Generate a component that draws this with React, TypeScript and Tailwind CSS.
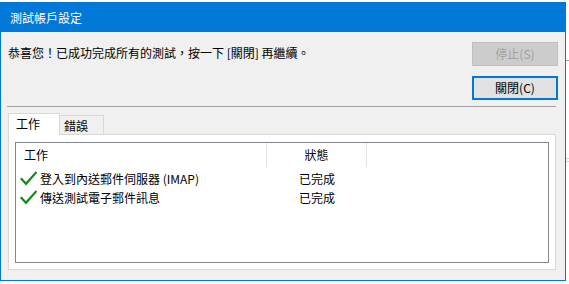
import React from 'react';

function Check() {
  return (
    <svg width="17" height="15" viewBox="0 0 17 15" className="shrink-0">
      <path d="M1.5 8 L6 12.8 L15.8 1.8" fill="none" stroke="#138a13" strokeWidth="2.2" strokeLinecap="square" />
    </svg>
  );
}

const rows = [
  { task: '登入到內送郵件伺服器 (IMAP)', status: '已完成' },
  { task: '傳送測試電子郵件訊息', status: '已完成' },
];

export default function App() {
  return (
    <div lang="zh-TW" className="relative w-[569px] h-[284px] overflow-hidden bg-white font-['Noto_Sans_CJK_TC','Noto_Sans',sans-serif] text-[12px] leading-[16px] text-black [font-feature-settings:'locl']">
      {/* background window peeking out */}
      <div className="absolute left-[566px] top-[60px] w-[3px] h-px bg-[#a0a0a0]" />
      <div className="absolute left-[566px] top-[158px] w-[3px] h-px bg-[#d4d4d4]" />
      <div className="absolute left-[566px] top-[161px] w-[3px] h-px bg-[#d4d4d4]" />
      <div className="absolute left-[12px] top-[282px] text-[12px]">登入帳號</div>

      <div className="relative mt-[2px] w-[566px] h-[279px] border border-[#0078d7] bg-[#f0f0f0] flex flex-col">
        <div className="h-[29px] bg-[#0078d7] text-white flex items-center pl-[9px] shrink-0">測試帳戶設定</div>

        <div className="flex justify-between pt-[10px] pr-[7px]">
          <div className="pl-[7px] leading-[22px]">恭喜您！已成功完成所有的測試，按一下 [關閉] 再繼續。</div>
          <div className="flex flex-col gap-[10px]">
            <button className="w-[86px] h-[24px] bg-[#cccccc] border border-[#bfbfbf] text-[#a0a0a0]">停止(S)</button>
            <button className="w-[86px] h-[24px] bg-[#e1e1e1] border-2 border-[#0078d7] text-black">關閉(C)</button>
          </div>
        </div>

        <div className="mt-[6px] ml-[6px] w-[549px] h-px bg-[#a0a0a0]" />

        <div className="mt-[6px] ml-[7px] flex items-end h-[21px]">
          <div className="relative z-10 -mb-px w-[52px] h-[22px] bg-white border border-b-0 border-[#d9d9d9] pl-[7px] pt-[2px]">工作</div>
          <div className="w-[44px] h-[19px] border-t border-r border-[#d9d9d9] pl-[4px] pt-[2px]">錯誤</div>
        </div>

        <div className="ml-[7px] w-[548px] h-[136px] bg-white border border-[#d9d9d9] pt-[7px] pl-[6px]">
          <div className="w-[534px] h-[121px] border border-[#828790] bg-white">
            <div className="flex h-[24px]">
              <div className="w-[251px] pl-[8px] flex items-center border-r border-[#e5e5e5]">工作</div>
              <div className="w-[100px] flex items-center justify-center border-r border-[#e5e5e5]">狀態</div>
            </div>
            <div className="pt-[2px]">
              {rows.map((r) => (
                <div key={r.task} className="flex h-[19px] items-center">
                  <div className="w-[251px] pl-[4px] flex items-center gap-[3px]">
                    <Check />
                    <span>{r.task}</span>
                  </div>
                  <div className="w-[100px] text-center">{r.status}</div>
                </div>
              ))}
            </div>
          </div>
        </div>
      </div>
    </div>
  );
}
